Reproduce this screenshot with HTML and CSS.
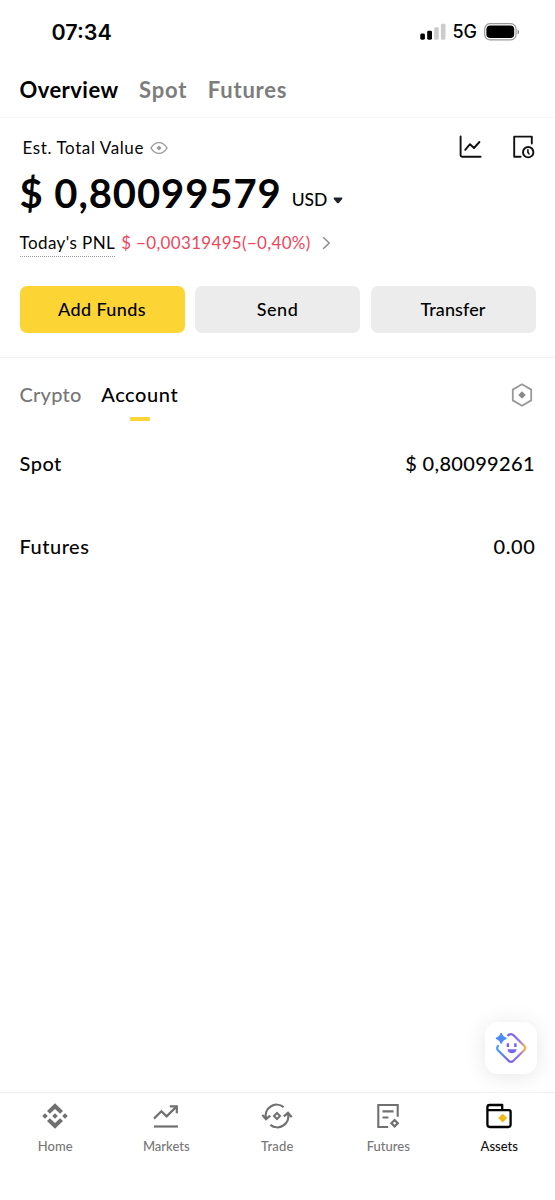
FILE: index.html
```
<!DOCTYPE html>
<html lang="en">
<head>
<meta charset="utf-8">
<title>Assets</title>
<link rel="stylesheet" href="styles.css">
</head>
<body>
<div class="app">
  <header class="status">
    <span class="time">07:34</span>
    <div class="status-right">
      <svg class="signal" width="26" height="18" viewBox="0 0 26 18"><rect x="0.3" y="10.5" width="4.6" height="6.2" rx="1.4" fill="#000"/><rect x="7.2" y="7.7" width="4.8" height="9" rx="1.4" fill="#000"/><rect x="14.2" y="4.2" width="4.6" height="12.5" rx="1.4" fill="#ccc"/><rect x="20.9" y="0.8" width="4.6" height="15.9" rx="1.4" fill="#ccc"/></svg>
      <span class="network">5G</span>
      <svg class="battery" width="36" height="18" viewBox="0 0 36 18"><rect x="0.7" y="0.7" width="31.4" height="16.2" rx="5.3" fill="none" stroke="#999" stroke-width="1.2"/><rect x="2.4" y="2.5" width="27.8" height="12.6" rx="3.8" fill="#000"/><path d="M33.6 6.5v4.8q1.6-.8 1.6-2.4t-1.6-2.4z" fill="#888"/></svg>
    </div>
  </header>

  <nav class="top-tabs">
    <span class="tab active">Overview</span>
    <span class="tab">Spot</span>
    <span class="tab">Futures</span>
  </nav>

  <section class="summary">
    <div class="label-row">
      <span class="est">Est. Total Value</span>
      <svg class="eye" width="18" height="14" viewBox="0 0 18 14" fill="none" stroke="#999" stroke-width="1.4"><path d="M.9 7Q4.2 1.6 9 1.6T17.1 7Q13.8 12.4 9 12.4T.9 7z" stroke-linejoin="round"/><path d="M9 4.4L11.6 7 9 9.6 6.4 7z" fill="#999" stroke="none"/></svg>
      <div class="tools">
        <svg width="24" height="24" viewBox="0 0 24 24" fill="none" stroke="#111" stroke-width="1.9" stroke-linecap="round" stroke-linejoin="round"><path d="M1.6 1.4V20a1.8 1.8 0 0 0 1.8 1.8H21.6"/><path d="M6.2 14.8L11 9.2 15 13 20.4 7"/></svg>
        <svg width="24" height="24" viewBox="0 0 24 24" fill="none" stroke="#111" stroke-width="1.9" stroke-linecap="round" stroke-linejoin="round"><path d="M8.6 21.8H2.2V1.6H19.8V8.6"/><circle cx="16.2" cy="17.2" r="5.2"/><path d="M15.9 14.9V17.3L17 18.9" stroke-width="1.6"/></svg>
      </div>
    </div>
    <div class="amount-row">
      <span class="amount">$ 0,80099579</span>
      <span class="currency">USD</span>
      <svg class="caret" width="10" height="7" viewBox="0 0 10 7"><path d="M1.2.5h7.6q1 .2.4 1.4L6.1 5.7Q5 6.8 3.9 5.7L.8 1.9Q.2.7 1.2.5z" fill="#1e2329"/></svg>
    </div>
    <div class="pnl-row">
      <span class="pnl-label">Today's PNL</span>
      <span class="pnl-value">$ −0,00319495(−0,40%)</span>
      <svg class="chev" width="9" height="14" viewBox="0 0 9 14" fill="none" stroke="#888" stroke-width="1.4"><path d="M1.2 1.2L7.2 7 1.2 12.8"/></svg>
    </div>
    <div class="actions">
      <button class="btn primary">Add Funds</button>
      <button class="btn send">Send</button>
      <button class="btn transfer">Transfer</button>
    </div>
  </section>

  <section class="holdings">
    <div class="sub-tabs">
      <span class="sub">Crypto</span>
      <span class="sub active">Account</span>
      <svg class="hex" width="22" height="24" viewBox="0 0 22 24" fill="none" stroke="#999" stroke-width="1.8" stroke-linejoin="round"><path d="M11 1.3L20.2 6.6V17.4L11 22.7 1.8 17.4V6.6z"/><path d="M11 8.3L14.7 12 11 15.7 7.3 12z" fill="#888" stroke="none"/></svg>
    </div>
    <div class="row"><span class="name">Spot</span><span class="value">$ 0,80099261</span></div>
    <div class="row"><span class="name">Futures</span><span class="value zero">0.00</span></div>
  </section>

  <nav class="bottom">
    <button class="fab" aria-label="Assistant">
      <svg width="32" height="32" viewBox="0 0 32 32" fill="none">
        <defs><linearGradient id="g" x1="0" y1="0" x2="1" y2="0"><stop offset="0" stop-color="#45a3fa"/><stop offset=".4" stop-color="#7461ee"/><stop offset=".8" stop-color="#9c72ee"/><stop offset="1" stop-color="#f5b63a"/></linearGradient></defs>
        <path d="M13.1 3.4Q16 .9 18.7 3.4L29.2 13.7Q31.2 16 29.2 18.3L18.4 28.8Q16 30.8 13.6 28.8L3.2 18.6Q1.2 16.4 3 14" stroke="url(#g)" stroke-width="2.2" stroke-linecap="round"/>
        <path d="M6.2 1.2Q7.2 5.4 11.4 6.4 7.2 7.4 6.2 11.6 5.2 7.4 1 6.4 5.2 5.4 6.2 1.2z" fill="#4a8df8" stroke="#4a8df8" stroke-width="1.3"/>
        <path d="M12.9 11.3v3.7M20.4 11.3v3.7" stroke="#7563ed" stroke-width="2.4"/>
        <path d="M12.4 17.3h9.2q-.7 4-4.6 4t-4.6-4z" fill="#7b66ed"/>
      </svg>
    </button>
    <a class="item"><svg width="32" height="28" viewBox="0 0 32 28" fill="#707070"><path d="M16 1.2L24 8.9 21.1 11.8 16 6.9 10.9 11.8 8 8.9zM16 26.8L24 19.1 21.1 16.2 16 21.1 10.9 16.2 8 19.1zM16 11.2L18.8 14 16 16.8 13.2 14zM6 11.2L8.8 14 6 16.8 3.2 14zM26 11.2L28.8 14 26 16.8 23.2 14z"/></svg><span>Home</span></a>
    <a class="item"><svg width="32" height="28" viewBox="0 0 32 28" fill="none" stroke="#707070" stroke-width="2.2"><path d="M4 24.5H28"/><path d="M4 16.6L11.4 9.2 16.6 14.4 26.4 4.6"/><path d="M19.8 4.3H26.8V11.3"/></svg><span>Markets</span></a>
    <a class="item"><svg width="32" height="28" viewBox="0 0 32 28" fill="none" stroke="#707070" stroke-width="2.2"><path d="M22.6 5.2A11 11 0 0 0 5 16.5M1.3 12.9L5 17.2 9.2 13.6"/><path d="M9.4 22.8A11 11 0 0 0 27 11.5M22.8 14.4L27 10.8 30.7 15.1"/><path d="M16 11L19 14 16 17 13 14z" stroke-width="2"/></svg><span class="wide">Trade</span></a>
    <a class="item"><svg width="32" height="28" viewBox="0 0 32 28" fill="none" stroke="#707070" stroke-width="2.1"><path d="M16.2 25H6.3V3H25.7V14.8"/><path d="M10.5 9.4H21.5M10.5 15.5H16.4"/><path d="M22.6 18L25.8 21.2 22.6 24.4 19.4 21.2z" stroke-width="2.2"/></svg><span>Futures</span></a>
    <a class="item current"><svg width="32" height="28" viewBox="0 0 32 28" fill="none" stroke="#000" stroke-width="2.3" stroke-linejoin="round"><path d="M4.4 8.2H26.1Q27.6 8.2 27.6 9.7V22.6Q27.6 25 25.2 25H6.8Q4.4 25 4.4 22.6V5.2Q4.4 3 6.6 3H19.2V8.2"/><path d="M19.7 11.7L24.1 16.1 19.7 20.5 15.3 16.1z" fill="#f0b90b" stroke="none"/></svg><span>Assets</span></a>
  </nav>
</div>
</body>
</html>
```
FILE: styles.css
```
* { box-sizing: border-box; }
body { margin: 0; background: #fff; font-family: Lato, "Liberation Sans", sans-serif; color: #050505; }
.app { width: 555px; height: 1200px; display: flex; flex-direction: column; }
svg { display: block; flex: none; }
span { white-space: nowrap; }
.status { height: 62px; padding: 1px 35px 0 51.5px; display: flex; align-items: center; justify-content: space-between; font-family: Inter, sans-serif; }
.time { font-size: 21.5px; font-weight: 600; }
.status-right { display: flex; align-items: center; }
.network { font-size: 18px; font-weight: 500; margin: 0 7px 0 6px; }
.top-tabs { height: 56px; padding: 0 19.5px; display: flex; align-items: center; gap: 20.5px; border-bottom: 1px solid #f5f5f5; }
.tab { font-size: 22px; font-weight: 700; color: #7d7d7d; letter-spacing: .8px; }
.tab.active { color: #000; letter-spacing: .45px; }
.summary { height: 240px; padding: 15px 19.5px 0; border-bottom: 1px solid #f3f3f3; }
.label-row { height: 29px; display: flex; align-items: center; padding-left: 3px; }
.est { font-size: 17px; letter-spacing: .6px; }
.eye { margin-left: 6px; }
.tools { margin-left: auto; display: flex; gap: 29px; padding-bottom: 2px; }
.amount-row { height: 62px; display: flex; align-items: baseline; }
.amount { font-size: 40px; line-height: 62px; font-weight: 700; letter-spacing: .92px; }
.currency { font-size: 17.5px; font-weight: 500; margin-left: 10px; position: relative; top: -2px; }
.caret { margin-left: 6px; position: relative; top: -4.5px; }
.pnl-row { height: 37px; display: flex; align-items: center; }
.pnl-label { height: 28px; line-height: 27px; border-bottom: 1px dotted #999; font-size: 17px; letter-spacing: .42px; }
.pnl-value { color: #f0465c; font-size: 17px; margin-left: 6px; letter-spacing: .32px; }
.chev { margin-left: 11.5px; }
.actions { margin-top: 25px; display: grid; grid-template-columns: repeat(3, 1fr); gap: 10.5px; }
.btn { height: 47px; border: 0; border-radius: 7px; background: #ececec; color: #000; font: 500 18px Lato, sans-serif; padding: 0 0 2px; letter-spacing: .1px; }
.btn.primary { background: #fcd535; letter-spacing: .38px; }
.btn.send { letter-spacing: .55px; }
.holdings { flex: 1; padding: 0 19.5px; }
.sub-tabs { height: 74px; display: flex; align-items: center; gap: 19.5px; }
.sub { font-size: 20px; font-weight: 500; color: #777; position: relative; letter-spacing: .25px; margin-top: -2px; }
.sub.active { color: #000; letter-spacing: .6px; }
.sub.active::after { content: ""; position: absolute; left: 50%; width: 20px; height: 4px; margin-left: -10px; top: 35px; background: #fcd535; border-radius: 1px; }
.hex { margin-left: auto; margin-right: 2.5px; }
.row { height: 83px; display: flex; justify-content: space-between; align-items: flex-start; padding-top: 19px; font-size: 20px; font-weight: 500; line-height: 24px; }
.name { letter-spacing: .5px; }
.value { letter-spacing: .32px; margin-right: .7px; }
.value.zero { letter-spacing: .6px; margin-right: 0; }
.bottom { height: 108px; position: relative; border-top: 1px solid #f1f1f1; display: grid; grid-template-columns: repeat(5, 111px); align-items: start; padding-top: 9px; }
.item { display: flex; flex-direction: column; align-items: center; font-size: 13px; color: #777; gap: 8px; line-height: 16px; font-weight: 500; margin-left: -.5px; }
.item.current { color: #111; }
.wide { letter-spacing: .2px; }
.fab { position: absolute; right: 18px; top: -71px; width: 52px; height: 52px; border: 0; padding: 0; border-radius: 13px; background: #fff; box-shadow: 0 2px 22px rgba(0,0,0,.1); display: flex; align-items: center; justify-content: center; }
```
